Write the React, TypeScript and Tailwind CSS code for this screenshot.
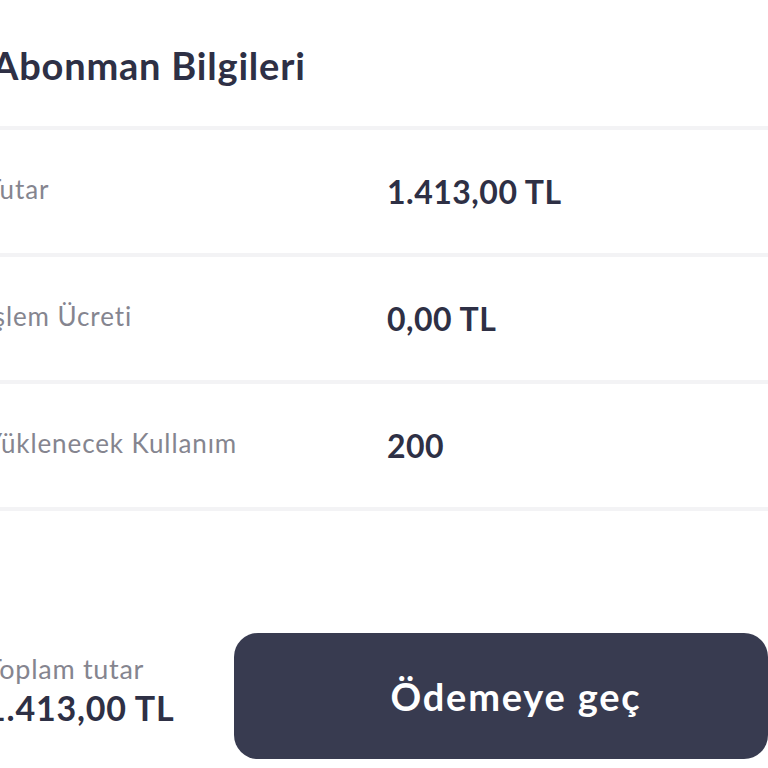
const rows = [
  { label: "Tutar", value: "1.413,00 TL" },
  { label: "İşlem Ücreti", value: "0,00 TL" },
  { label: "Yüklenecek Kullanım", value: "200" },
];

function Divider() {
  return <div className="h-[4px] bg-[#f3f3f5]" />;
}

export default function App() {
  return (
    <div
      className="w-[768px] h-[768px] overflow-hidden bg-white text-[#2e3045]"
      style={{ fontFamily: "Lato, 'Noto Sans', sans-serif" }}
    >
      <div className="ml-[-14px] w-[800px]">
        <h1 className="pt-[37px] h-[126px] pl-[6px] text-[38px] font-bold tracking-[0.8px]">
          Abonman Bilgileri
        </h1>

        {rows.map((row) => (
          <div key={row.label}>
            <Divider />
            <div className="h-[123px] grid grid-cols-[401px_1fr] items-center">
              <span className="text-[26px] text-[#85858f] tracking-[0.9px] -mt-[4px]">{row.label}</span>
              <span className="text-[32px] font-bold tracking-[0.5px]">{row.value}</span>
            </div>
          </div>
        ))}
        <Divider />

        <div className="mt-[122px] flex items-center gap-[20px]">
          <div className="w-[228px] flex flex-col pb-[12px]">
            <span className="text-[27px] text-[#85858f] tracking-[0.7px] leading-[36px]">Toplam tutar</span>
            <span className="text-[34px] font-bold tracking-[0.8px] leading-[42px]">1.413,00 TL</span>
          </div>
          <button className="w-[534px] h-[126px] rounded-[24px] bg-[#383b50] pl-[30px] text-white text-[38px] font-bold tracking-[1.8px]">
            Ödemeye geç
          </button>
        </div>
      </div>
    </div>
  );
}
